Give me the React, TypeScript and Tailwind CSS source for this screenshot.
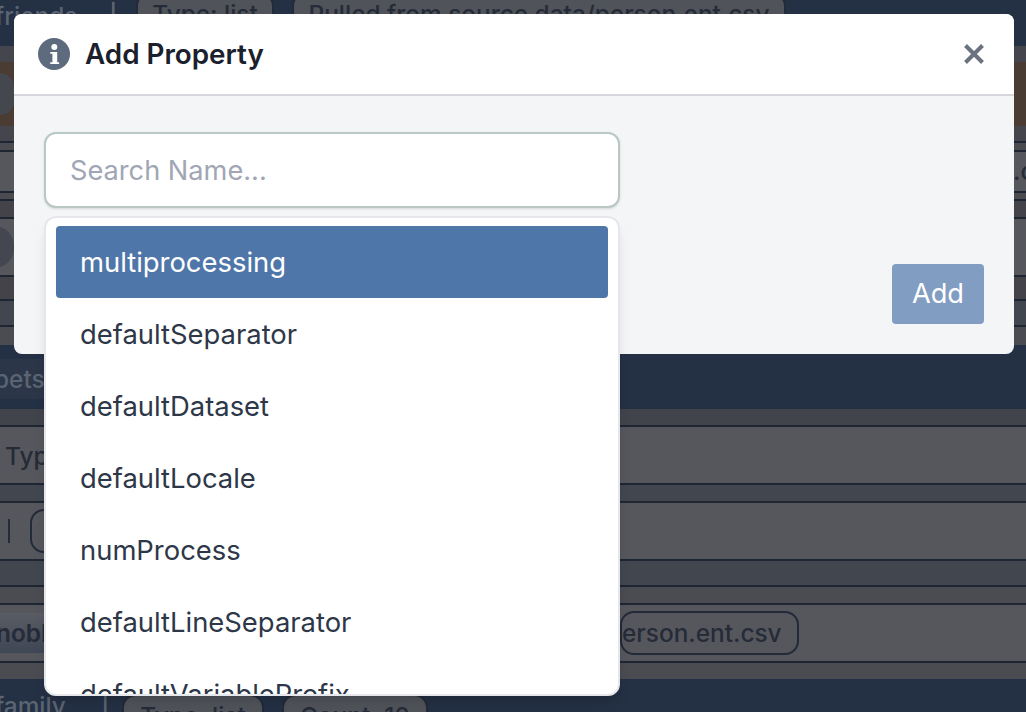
const options = [
  'multiprocessing',
  'defaultSeparator',
  'defaultDataset',
  'defaultLocale',
  'numProcess',
  'defaultLineSeparator',
  'defaultVariablePrefix',
]

const InfoIcon = () => (
  <svg viewBox="0 0 32 32" className="h-[32px] w-[32px] text-[#5e6a7e]">
    <circle cx="16" cy="16" r="16" fill="currentColor" />
    <circle cx="16.3" cy="9" r="3" fill="#fff" />
    <path
      d="M12.2 14h7v10.3h1.9V26h-8.9v-1.7h2.2v-8.6h-2.2z"
      fill="#fff"
    />
  </svg>
)

const Pill = ({ label, className }: { label: string; className: string }) => (
  <span
    className={`flex h-[44px] shrink-0 items-center whitespace-nowrap rounded-[14px] border-2 border-[#232a38] text-[24.4px] font-medium text-[#252b38] ${className}`}
  >
    {label}
  </span>
)

const Background = () => (
  <div className="flex h-[712px] w-[1026px] flex-col overflow-hidden bg-[#243044] font-['Inter',sans-serif]">
    <div className="flex h-[46px] shrink-0 items-start bg-[#243044] text-[24.4px] font-medium text-[#5b6472]">
      <span className="ml-[-5px] mt-[-2px] w-[114px]">friends</span>
      <span className="mt-[-2px] w-[27px] text-[#5f6670]">|</span>
      <Pill label="Type: list" className="mt-[-8px] w-[138px] justify-center border-[#1c2638] bg-[#505359] text-[#2a3342]" />
      <Pill label="Pulled from source data/person.ent.csv" className="ml-[18px] mt-[-8px] w-[494px] justify-center border-[#1c2638] bg-[#505359] text-[#2a3342]" />
    </div>
    <div className="h-[16px] shrink-0 bg-[#45464d]" />
    <div className="flex h-[64px] shrink-0 items-center bg-[#4a3c33]">
      <div className="ml-[-16px] h-[42px] w-[30px] rounded-[14px] bg-[#45474f]" />
    </div>
    <div className="h-[17px] shrink-0 border-b-2 border-[#1e2533] bg-[#45464d]" />
    <div className="h-[9px] shrink-0 border-b-2 border-[#1e2533] bg-[#4b4c52]" />
    <div className="h-[41px] shrink-0 overflow-hidden whitespace-nowrap border-b-2 border-[#1e2533] bg-[#56575c] pl-[1013px]">
      <span className="text-[24.4px] font-medium leading-[39px] text-[#252b38]">.csv</span>
    </div>
    <div className="h-[8px] shrink-0 border-b-2 border-[#1e2533] bg-[#4b4c52]" />
    <div className="h-[18px] shrink-0 border-b-2 border-[#1e2533] bg-[#434349]" />
    <div className="flex h-[58px] shrink-0 items-center border-b-2 border-[#1e2533] bg-[#56575c]">
      <div className="ml-[-26px] h-[42px] w-[40px] rounded-full bg-[#44474f]" />
    </div>
    <div className="h-[24px] shrink-0 border-b-2 border-[#1e2533] bg-[#434349]" />
    <div className="h-[26px] shrink-0 border-b-2 border-[#1e2533] bg-[#42464f]" />
    <div className="h-[18px] shrink-0 bg-[#4b4c52]" />
    <div className="flex h-[64px] shrink-0 items-center bg-[#243044]">
      <span className="ml-[-6px] mt-[4px] flex h-[40px] items-center bg-[#2b3649] pr-[6px] text-[24.4px] font-medium text-[#5b6472]">pets</span>
    </div>
    <div className="h-[18px] shrink-0 border-b-2 border-[#1e2533] bg-[#42444c]" />
    <div className="flex h-[58px] shrink-0 items-center border-b-2 border-[#1e2533] bg-[#56575c]">
      <span className="ml-[5px] mt-[2px] text-[24.4px] font-medium text-[#252b38]">Type</span>
    </div>
    <div className="h-[18px] shrink-0 border-b-2 border-[#1e2533] bg-[#42464f]" />
    <div className="flex h-[58px] shrink-0 items-center gap-[20px] border-b-2 border-[#1e2533] bg-[#56575c]">
      <span className="ml-[8px] h-[24px] w-[2px] bg-[#252b38]" />
      <Pill label="" className="w-[40px] bg-[#56575c]" />
    </div>
    <div className="h-[26px] shrink-0 border-b-2 border-[#1e2533] bg-[#42464f]" />
    <div className="h-[18px] shrink-0 border-b-2 border-[#1e2533] bg-[#4b4c52]" />
    <div className="flex h-[58px] shrink-0 items-center border-b-2 border-[#1e2533] bg-[#56575c]">
      <span className="ml-[-4px] flex h-[40px] w-[64px] shrink-0 items-center bg-gradient-to-b from-[#5a5d64] to-[#3f4655] text-[24.4px] font-semibold text-[#252b38]">
        nobl
      </span>
      <Pill label="erson.ent.csv" className="ml-[560px] w-[179px]" />
    </div>
    <div className="h-[16px] shrink-0 bg-[#4b4c52]" />
    <div className="flex h-[32px] shrink-0 items-start text-[24.4px] font-medium text-[#5b6472]">
      <span className="ml-[-5px] mt-[9px] w-[106px]">family</span>
      <span className="mt-[9px] w-[21px]">|</span>
      <Pill label="Type: list" className="mt-[15px] w-[142px] justify-center border-[#1c2638] bg-[#505359] text-[#2a3342]" />
      <Pill label="Count: 10" className="ml-[18px] mt-[15px] w-[146px] justify-center border-[#1c2638] bg-[#505359] text-[#2a3342]" />
    </div>
  </div>
)

export default function App() {
  return (
    <div className="relative h-[712px] w-[1026px] overflow-hidden font-['Inter',sans-serif]">
      <Background />

      {/* modal */}
      <div className="absolute left-[14px] top-[14px] flex h-[340px] w-[1000px] flex-col overflow-hidden rounded-[8px] bg-[#f4f5f7]">
        <div className="flex h-[82px] shrink-0 items-center justify-between border-b-2 border-[#d6d6de] bg-white pl-[24px] pr-[30px]">
          <div className="flex items-center gap-[15px]">
            <InfoIcon />
            <span className="pt-[1px] text-[27.8px] font-semibold text-[#1a202c]">Add Property</span>
          </div>
          <svg viewBox="0 0 20 20" className="h-[20px] w-[20px] text-[#6b7280]" fill="none" stroke="currentColor" strokeWidth="4">
            <path d="M1.5 1.5 18.5 18.5M18.5 1.5 1.5 18.5" />
          </svg>
        </div>
        <div className="flex flex-1 flex-col pl-[30px] pr-[30px] pt-[36px]">
          <input
            placeholder="Search Name..."
            className="h-[76px] w-[576px] rounded-[12px] border-2 border-[#b9c8c5] bg-white px-[24px] text-[27.2px] shadow-sm outline-none placeholder:text-[#a0a6b4]"
          />
          <button className="ml-auto mt-[56px] h-[60px] w-[92px] rounded-[4px] bg-[#829dc2] pt-[1px] text-[27.2px] text-white">
            Add
          </button>
        </div>
      </div>

      {/* dropdown */}
      <div className="absolute left-[44px] top-[216px] h-[480px] w-[576px] overflow-hidden rounded-[12px] border-2 border-[#e5e7eb] bg-white px-[10px] pt-[8px] shadow-lg">
        {options.map((o, i) => (
          <div
            key={o}
            className={`flex h-[72px] shrink-0 items-center rounded-[4px] px-[24px] pt-[1px] text-[27.4px] ${
              i === 0 ? 'bg-[#4f76a9] text-white' : 'text-[#2d3748]'
            }`}
          >
            {o}
          </div>
        ))}
      </div>
    </div>
  )
}
